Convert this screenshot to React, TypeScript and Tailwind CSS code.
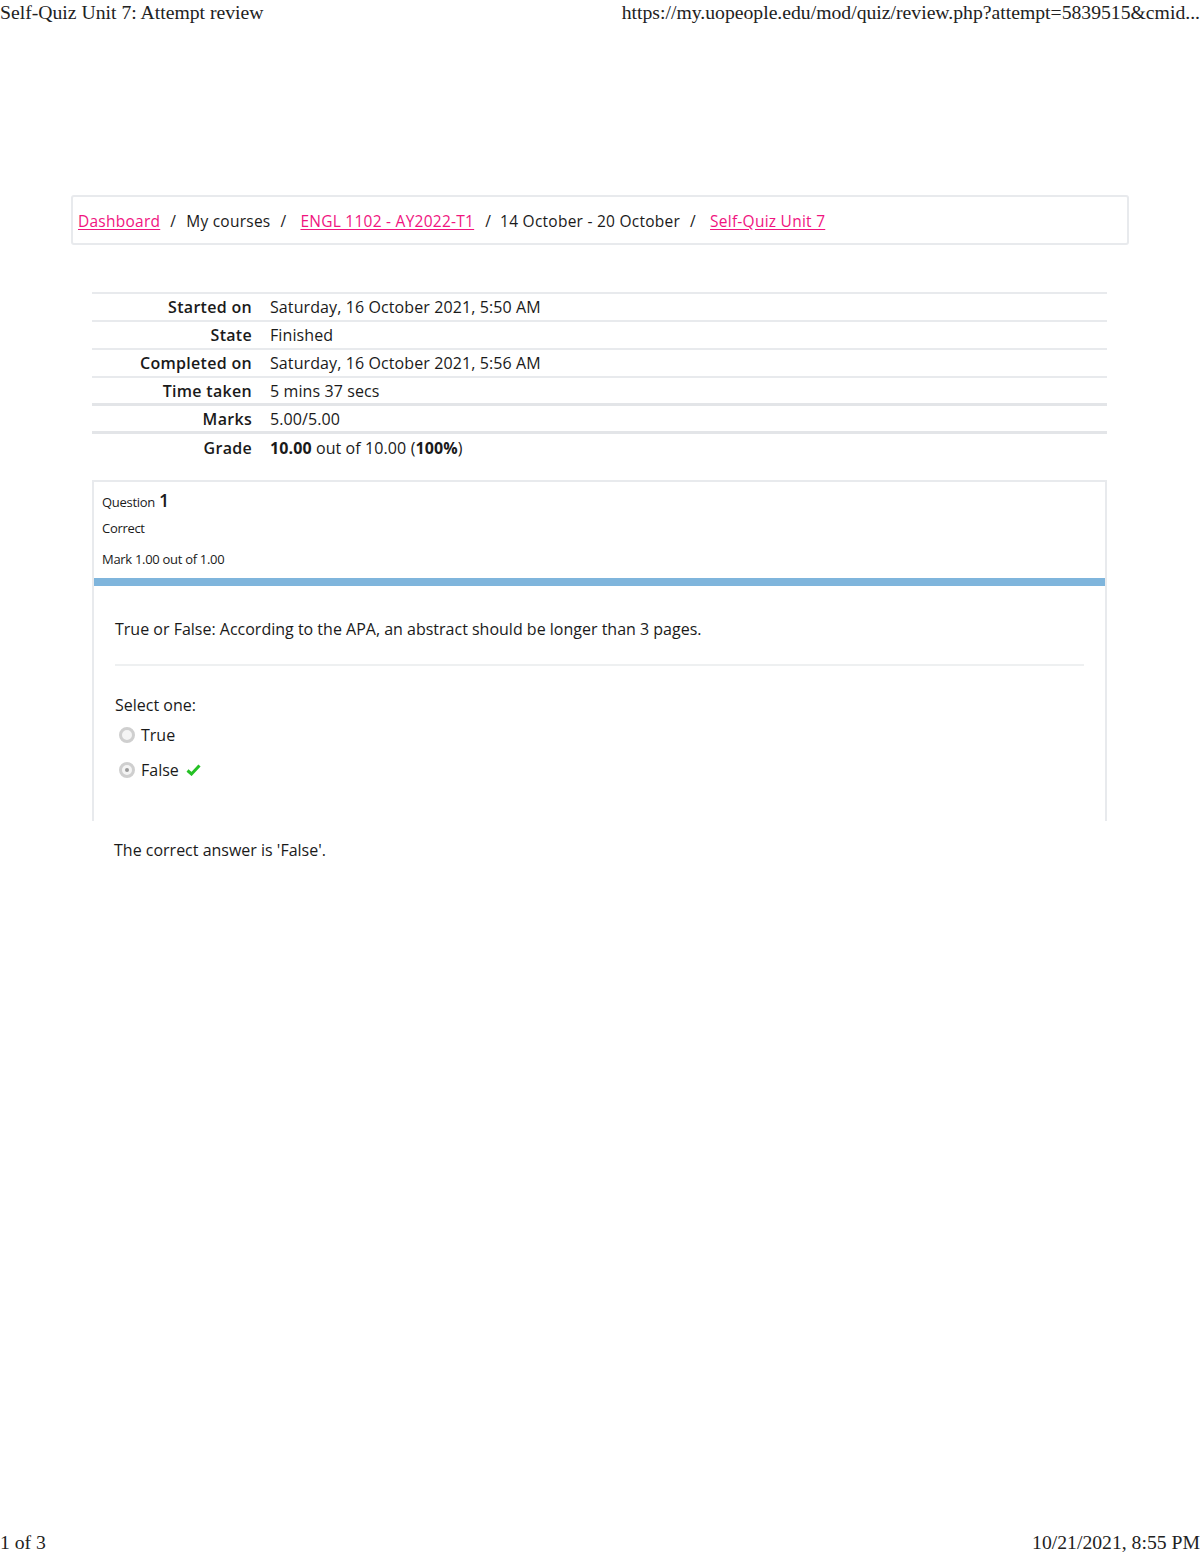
import React from 'react';

const rows: { label: string; value: React.ReactNode; thick?: boolean }[] = [
  { label: 'Started on', value: 'Saturday, 16 October 2021, 5:50 AM' },
  { label: 'State', value: 'Finished' },
  { label: 'Completed on', value: 'Saturday, 16 October 2021, 5:56 AM' },
  { label: 'Time taken', value: '5 mins 37 secs', thick: true },
  { label: 'Marks', value: '5.00/5.00', thick: true },
  {
    label: 'Grade',
    value: (
      <>
        <b>10.00</b> out of 10.00 (<b>100%</b>)
      </>
    ),
  },
];

const Radio: React.FC<{ checked?: boolean }> = ({ checked }) => (
  <span className="inline-flex h-[16px] w-[16px] items-center justify-center rounded-full border-[3px] border-[#cfcfcf] bg-[#f4f4f4]">
    {checked && <span className="h-[4px] w-[4px] rounded-full bg-[#9a9a9a]"></span>}
  </span>
);

export default function App() {
  return (
    <div className="flex min-h-[1553px] flex-col bg-white text-black">
      {/* print header */}
      <div className="flex justify-between font-['Liberation_Serif',serif] text-[19.7px] leading-[24px] text-[#222]">
        <span>Self-Quiz Unit 7: Attempt review</span>
        <span>https://my.uopeople.edu/mod/quiz/review.php?attempt=5839515&amp;cmid...</span>
      </div>

      <div className="font-['Open_Sans',sans-serif] text-[16px] text-[#1a1a1a]">
        {/* breadcrumb */}
        <div className="ml-[71px] mt-[171px] flex h-[50px] w-[1058px] items-center rounded-[3px] border-2 border-[#e8eaed] px-[5px] pt-[3px] text-[15.5px] tracking-[0.25px]">
          <a className="text-[#f0157f] underline underline-offset-2">Dashboard</a>
          <span className="mx-[10px]">/</span>
          <span>My courses</span>
          <span className="ml-[10px] mr-[14px]">/</span>
          <a className="text-[#f0157f] underline underline-offset-2">ENGL 1102 - AY2022-T1</a>
          <span className="ml-[11px] mr-[9px]">/</span>
          <span>14 October - 20 October</span>
          <span className="ml-[10px] mr-[14px]">/</span>
          <a className="text-[#f0157f] underline underline-offset-2">Self-Quiz Unit 7</a>
        </div>

        {/* summary table */}
        <div className="ml-[92px] mt-[47px] w-[1015px] border-t-2 border-[#e8eaed]">
          {rows.map((r) => (
            <div
              key={r.label}
              className={`flex h-[28px] items-center ${r.label === 'Grade' ? '' : r.thick ? 'border-b-[3px] border-[#e3e5e8]' : 'border-b-2 border-[#e8eaed]'}`}
            >
              <span className="w-[160px] text-right font-semibold tracking-[0.3px]">{r.label}</span>
              <span className="pl-[18px] tracking-[0.1px]">{r.value}</span>
            </div>
          ))}
        </div>

        {/* question */}
        <div className="ml-[92px] mt-[18px] w-[1015px] border-x-2 border-t-2 border-[#e8eaed]">
          <div className="px-[8px] pt-[9px] pb-[12px] text-[13px] tracking-[-0.3px] leading-none">
            <div className="flex items-baseline gap-[4px]">
              <span>Question</span>
              <span className="text-[18px] font-semibold">1</span>
            </div>
            <div className="mt-[13px]">Correct</div>
            <div className="mt-[18px]">Mark 1.00 out of 1.00</div>
          </div>
          <div className="h-[8px] bg-[#7fb5dc]"></div>
          <div className="h-[235px] px-[21px] pt-[31px]">
            <p>True or False: According to the APA, an abstract should be longer than 3 pages.</p>
            <div className="mt-[23px] border-t-2 border-[#eef0f1]"></div>
            <div className="mt-[27px]">Select one:</div>
            <div className="mt-[6px] flex items-center gap-[6px] pl-[4px]">
              <Radio />
              <span>True</span>
            </div>
            <div className="mt-[11px] flex items-center gap-[6px] pl-[4px]">
              <Radio checked />
              <span>False</span>
              <svg width="15" height="12" viewBox="0 0 15 12" className="ml-[1px]">
                <path d="M1.5 6.5 L5.5 10 L13.5 1.5" fill="none" stroke="#25c125" strokeWidth="3" strokeLinejoin="miter" />
              </svg>
            </div>
          </div>
        </div>
        <div className="ml-[114px] mt-[17px]">The correct answer is 'False'.</div>
      </div>

      {/* print footer */}
      <div className="mt-auto flex justify-between font-['Liberation_Serif',serif] text-[19.7px] leading-[22px] text-[#222]">
        <span>1 of 3</span>
        <span>10/21/2021, 8:55 PM</span>
      </div>
    </div>
  );
}
